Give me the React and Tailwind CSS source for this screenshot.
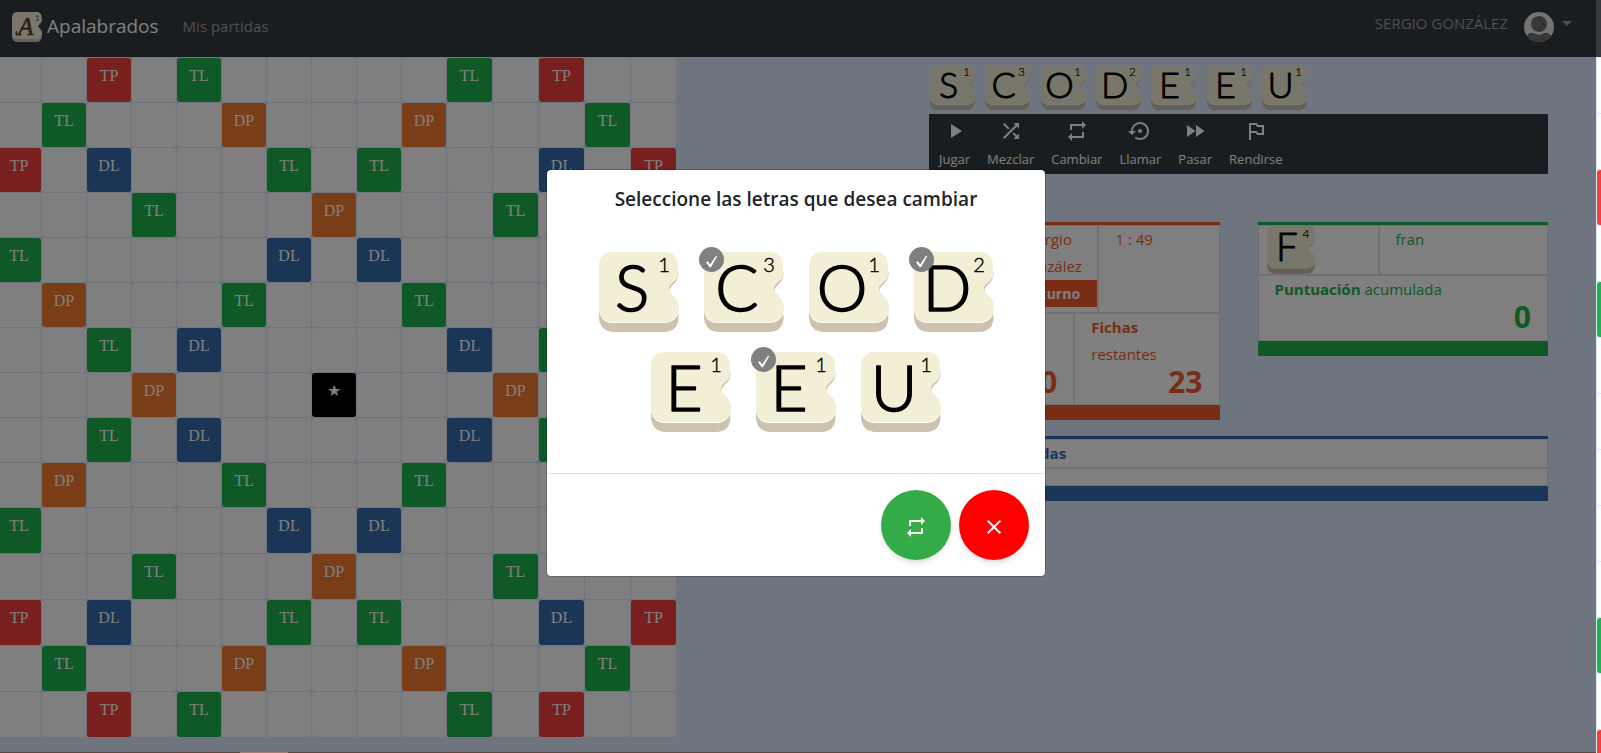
import React from "react";
import {
  MdPlayArrow,
  MdShuffle,
  MdRepeat,
  MdSettingsBackupRestore,
  MdFastForward,
  MdOutlinedFlag,
  MdClose,
} from "react-icons/md";

const FACE =
  "M14 0H65C74 0 79 6 79 14V22C79 29 70 31 69.500 36.500C69.500 42 80 45 80 57C80 65 74 71 65 71H14C5 71 0 65 0 57V14C0 6 5 0 14 0Z";
const BASE =
  "M14 8H65C74 8 79.500 14 79.500 22C79.500 31 71 33 70.500 38C70.500 44 80 52 79.500 66C79 75 74 80 65 80H15C6 80 1 75 0 66V22C0 14 5 8 14 8Z";

function Tile({ letter, value, className }) {
  return (
    <svg viewBox="0 0 80 80" className={`overflow-visible ${className}`} role="img" aria-label={`${letter} ${value}`}>
      <path d={BASE} fill="#ccc2ae" />
      <path d={FACE} fill="#fffef6" />
      <path d={FACE} fill="#f3eed6" transform="scale(1 .985)" />
      <text
        x="33"
        y="59"
        textAnchor="middle"
        stroke="#000"
        strokeWidth="1.600"
        strokeLinejoin="round"
        className="font-['Lato',sans-serif] text-[64px] font-light"
      >
        {letter}
      </text>
      <text
        x="65"
        y="20"
        textAnchor="middle"
        stroke="#000"
        strokeWidth=".4"
        className="font-['Lato',sans-serif] text-[20px] font-light"
      >
        {value}
      </text>
    </svg>
  );
}

const rack = [
  { letter: "S", value: 1 },
  { letter: "C", value: 3, selected: true },
  { letter: "O", value: 1 },
  { letter: "D", value: 2, selected: true },
  { letter: "E", value: 1 },
  { letter: "E", value: 1, selected: true },
  { letter: "U", value: 1 },
];

const half = [
  { 2: "TP", 4: "TL", 10: "TL", 12: "TP" },
  { 1: "TL", 5: "DP", 9: "DP", 13: "TL" },
  { 0: "TP", 2: "DL", 6: "TL", 8: "TL", 12: "DL", 14: "TP" },
  { 3: "TL", 7: "DP", 11: "TL" },
  { 0: "TL", 6: "DL", 8: "DL", 14: "TL" },
  { 1: "DP", 5: "TL", 9: "TL", 13: "DP" },
  { 2: "TL", 4: "DL", 10: "DL", 12: "TL" },
];
const rows = [...half, { 3: "DP", 7: "★", 11: "DP" }, ...[...half].reverse()];

const squareColor = {
  TP: "bg-[#f23f3a]",
  TL: "bg-[#1fb24e]",
  DP: "bg-[#f27b30]",
  DL: "bg-[#366aac]",
  "★": "bg-black",
};

function Board() {
  return (
    <div className="-ml-[3px] mt-px grid shrink-0 grid-cols-[repeat(10,44px)_repeat(5,45px)] grid-rows-[repeat(10,44px)_repeat(5,45px)] gap-px">
      {rows.flatMap((row, r) =>
        Array.from({ length: 15 }, (_, c) => (
          <div
            key={`${r}-${c}`}
            className={`rounded-[3px] pt-1.5 text-center font-['Liberation_Serif',serif] text-base leading-6 text-white ${
              squareColor[row[c]] || "bg-white"
            }`}
          >
            {row[c]}
          </div>
        ))
      )}
    </div>
  );
}

const actions = [
  { label: "Jugar", Icon: MdPlayArrow },
  { label: "Mezclar", Icon: MdShuffle },
  { label: "Cambiar", Icon: MdRepeat },
  { label: "Llamar", Icon: MdSettingsBackupRestore },
  { label: "Pasar", Icon: MdFastForward },
  { label: "Rendirse", Icon: MdOutlinedFlag },
];

const cell = "border border-[#dee2e6] bg-white";

function Header() {
  return (
    <header className="flex h-[57px] items-center bg-[#343a40] pr-6 pb-1 pl-3">
      <a href="#inicio" className="flex items-center gap-[5px] text-[19px] text-white">
        <svg viewBox="0 0 80 80" className="size-[30px] overflow-visible" aria-hidden="true">
          <path d={BASE} fill="#c9c5b8" />
          <path d={FACE} fill="#f5f1dc" />
          <text
            x="37"
            y="60"
            textAnchor="middle"
            fill="#5a3a20"
            stroke="#5a3a20"
            strokeWidth="1.500"
            className="font-['Liberation_Serif',serif] text-[66px] italic"
          >
            A
          </text>
          <path d="M20 58C14 64 9 60 12 53" fill="none" stroke="#5a3a20" strokeWidth="4.500" strokeLinecap="round" />
          <text x="68" y="24" textAnchor="middle" fill="#5a3a20" className="font-['Lato',sans-serif] text-[20px]">
            1
          </text>
        </svg>
        Apalabrados
      </a>
      <a href="#partidas" className="ml-6 text-[15px] text-white/50">
        Mis partidas
      </a>
      <button type="button" className="ml-auto flex items-center text-[15px] text-white/50">
        <span className="-mt-1.5">SERGIO GONZÁLEZ</span>
        <svg viewBox="0 0 30 30" className="ml-4 size-[30px]" aria-hidden="true">
          <clipPath id="avatar">
            <circle cx="15" cy="15" r="15" />
          </clipPath>
          <g clipPath="url(#avatar)">
            <rect width="30" height="30" fill="#e6e6e6" />
            <path d="M3 25C4 20 9 20.500 11 21.500Q15 24 19 21.500C21 20.500 26 20 27 25V30H3Z" fill="#6e6e6e" />
            <circle cx="15" cy="12" r="9" fill="#e6e6e6" />
            <circle cx="15" cy="12" r="8" fill="#6e6e6e" />
          </g>
        </svg>
        <svg viewBox="0 0 10 5" className="-mt-1.5 ml-2 h-[5px] w-2.5" aria-hidden="true">
          <path d="M0 0H10L5 5Z" fill="currentColor" />
        </svg>
      </button>
    </header>
  );
}

function Panels() {
  return (
    <div className="mt-12 grid grid-cols-2 items-start gap-x-[38px] gap-y-4 text-[15px] leading-[27px]">
      <section className="border-t-[3px] border-b-[15px] border-[#f45a2a] text-[#f45a2a]">
        <div className="grid h-[88px] grid-cols-12">
          <div className={`${cell} col-span-3`} />
          <div className={`${cell} col-span-4 text-center`}>
            Sergio
            <br />
            González
            <div className="bg-[#f45a2a] text-sm leading-[27px] font-bold text-white">Su turno</div>
          </div>
          <div className={`${cell} col-span-5 pl-4`}>1 : 49</div>
        </div>
        <div className="grid h-[92px] grid-cols-2">
          <div className={`${cell} px-4`}>
            <b>Puntuación</b>
            <br />
            acumulada
            <div className="text-right text-[30px] leading-[27px] font-bold">0</div>
          </div>
          <div className={`${cell} px-4`}>
            <b>Fichas</b>
            <br />
            restantes
            <div className="text-right text-[30px] leading-[27px] font-bold">23</div>
          </div>
        </div>
      </section>
      <section className="border-t-[3px] border-b-[15px] border-[#1fb24e] text-[#1fb24e]">
        <div className="grid h-[50px] grid-cols-12">
          <div className={`${cell} col-span-5 pl-2`}>
            <Tile letter="F" value={4} className="size-12" />
          </div>
          <div className={`${cell} col-span-7 px-4`}>fran</div>
        </div>
        <div className={`${cell} h-[66px] px-4`}>
          <b>Puntuación</b> acumulada
          <div className="text-right text-[30px] leading-[27px] font-bold">0</div>
        </div>
      </section>
      <section className="col-span-2 border-t-[3px] border-b-[15px] border-[#366aac] text-[#366aac]">
        <h2 className={`${cell} h-[29px] px-4 font-bold`}>Últimas jugadas</h2>
        <div className={`${cell} h-[18px]`} />
      </section>
    </div>
  );
}

function ChangeDialog() {
  return (
    <div
      role="dialog"
      aria-modal="true"
      aria-labelledby="dialog-title"
      className="w-[500px] rounded-[5px] border border-black/20 bg-white bg-clip-padding"
    >
      <h1 id="dialog-title" className="pt-3.5 text-center text-[19px] leading-[30px] font-semibold text-[#212529]">
        Seleccione las letras que desea cambiar
      </h1>
      <div className="flex flex-wrap justify-center gap-x-[25px] gap-y-5 px-10 pt-[38px] pb-[41px]">
        {rack.map(({ letter, value, selected }, i) => (
          <label key={i} className="relative size-20">
            <Tile letter={letter} value={value} className="size-20" />
            <input
              type="checkbox"
              defaultChecked={selected}
              aria-label={`Cambiar ${letter}`}
              className="peer absolute -top-[5px] -left-[5px] size-[25px] appearance-none rounded-full checked:bg-[#808080]"
            />
            <svg
              viewBox="0 0 25 25"
              className="pointer-events-none absolute -top-[5px] -left-[5px] hidden size-[25px] peer-checked:block"
              aria-hidden="true"
            >
              <path d="M7 15.200L8.800 14.200L11.200 17.500L17 8.800L18.200 9.300L12 20.300H10.700Z" fill="#fff" />
            </svg>
          </label>
        ))}
      </div>
      <div className="flex justify-end gap-2 border-t border-[#dee2e6] p-4">
        <button
          type="button"
          aria-label="Cambiar letras"
          className="flex size-[70px] items-center justify-center rounded-full bg-[#33ab47] pt-1 text-2xl text-white shadow-md"
        >
          <MdRepeat />
        </button>
        <button
          type="button"
          aria-label="Cerrar"
          className="flex size-[70px] items-center justify-center rounded-full bg-[#ff0000] pt-1 text-2xl text-white shadow-md"
        >
          <MdClose />
        </button>
      </div>
    </div>
  );
}

const edge = { 2: "bg-[#f23f3a]", 4: "bg-[#1fb24e]", 10: "bg-[#1fb24e]", 12: "bg-[#f23f3a]" };

export default function App() {
  return (
    <div className="flex h-screen overflow-hidden bg-[#dceafe] font-['Open_Sans','Noto_Sans',sans-serif]">
      <div className="relative flex min-w-0 flex-1 flex-col">
        <Header />
        <main className="flex min-h-0 flex-1 items-start overflow-hidden">
          <Board />
          <div className="mr-12 ml-[253px] min-w-0 flex-1 pt-2">
            <div className="flex w-[378px] justify-between pl-px">
              {rack.map(({ letter, value }, i) => (
                <Tile key={i} letter={letter} value={value} className="size-[45px]" />
              ))}
            </div>
            <nav className="mt-1 flex h-[60px] items-start gap-[17px] bg-[#343a40] px-2.5 pt-[5px] text-[13px] leading-5 text-white">
              {actions.map(({ label, Icon }) => (
                <button key={label} type="button" className="flex flex-col items-center gap-1.5">
                  <Icon className="size-6" />
                  {label}
                </button>
              ))}
            </nav>
            <Panels />
          </div>
        </main>
        <div className="flex h-px shrink-0 bg-[#5a463c]">
          <div className="ml-60 w-12 bg-[#a08070]" />
        </div>
        <div className="absolute inset-x-0 top-0 bottom-px flex items-start justify-center bg-black/50 pt-[169px] pr-1">
          <ChangeDialog />
        </div>
      </div>
      <div className="w-[5px] shrink-0 overflow-hidden" aria-hidden="true">
        <div className="h-[57px] bg-[#343a40]" />
        <div className="mt-px ml-px grid auto-rows-[55px] gap-px">
          {Array.from({ length: 13 }, (_, i) => (
            <div key={i} className={`rounded-l-[3px] ${edge[i] || "bg-white"}`} />
          ))}
        </div>
      </div>
    </div>
  );
}
